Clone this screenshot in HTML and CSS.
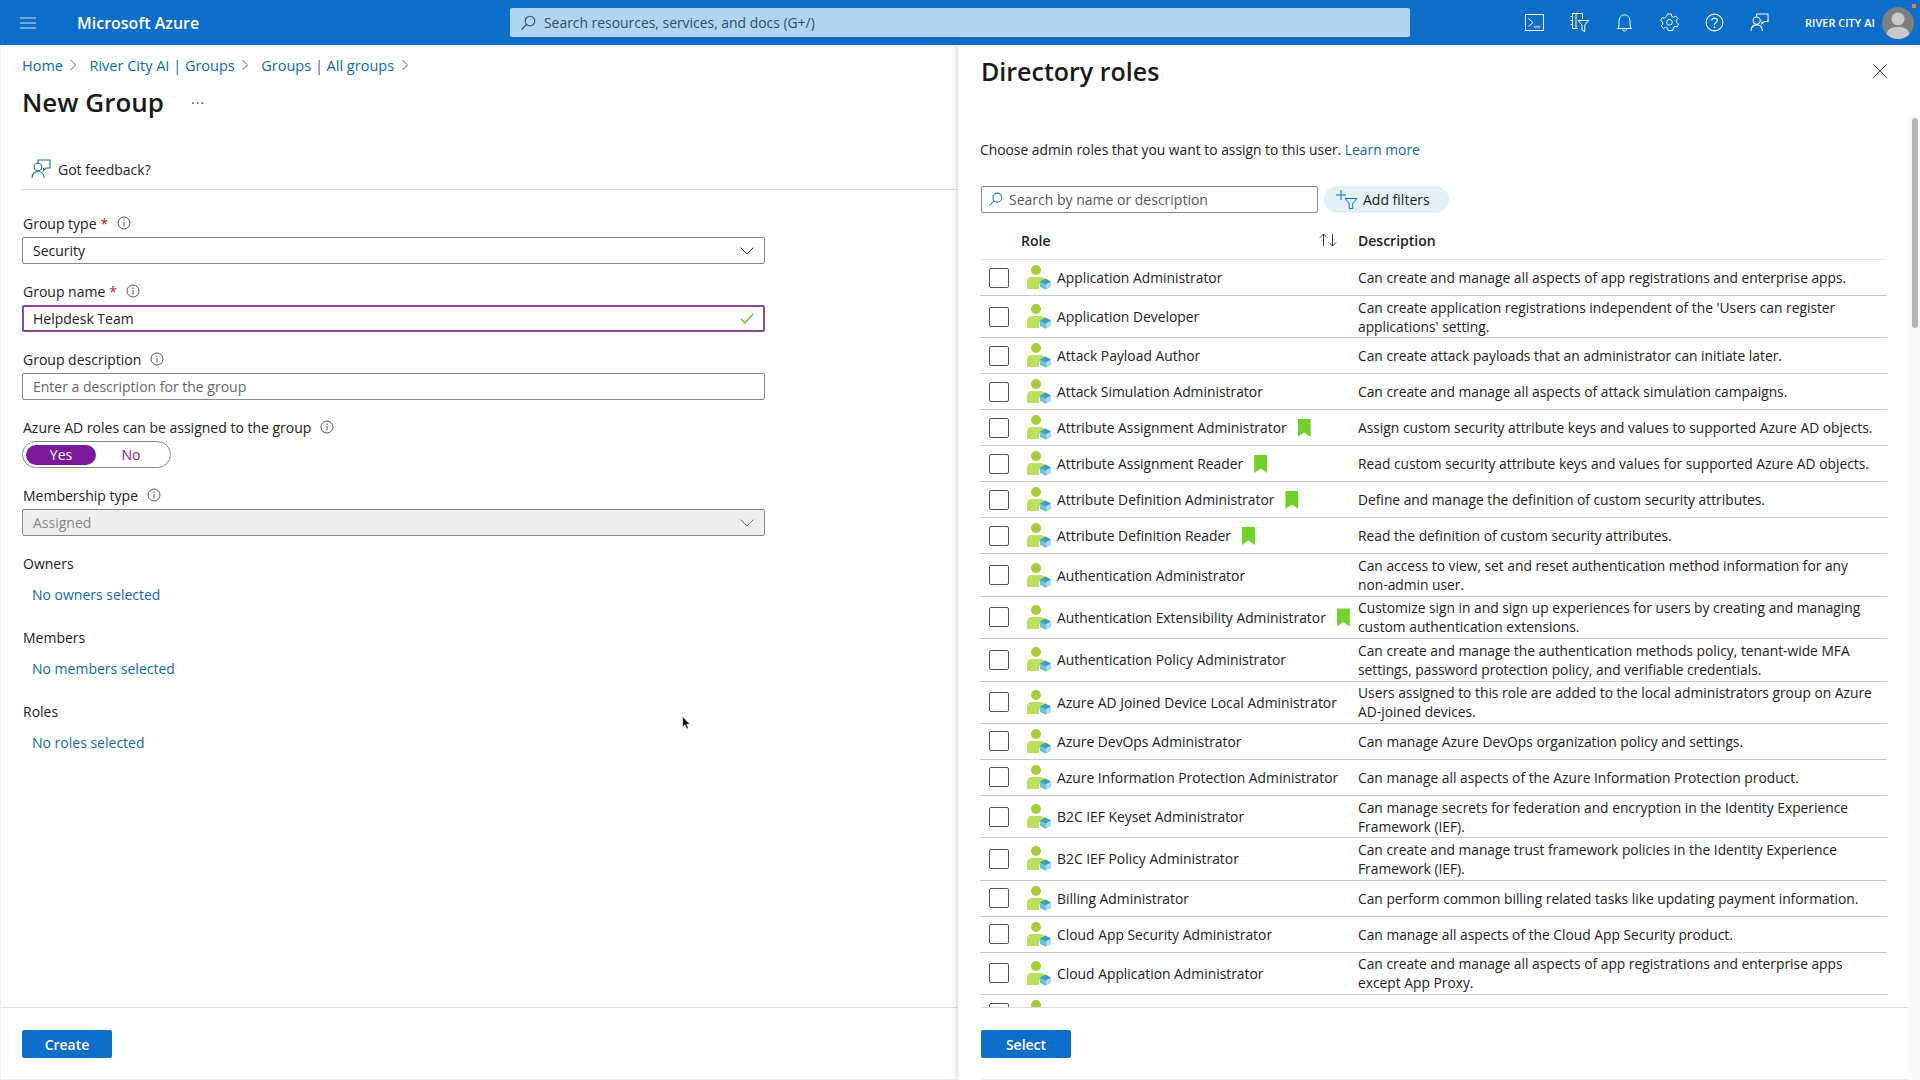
FILE: index.html
```html
<!DOCTYPE html>
<html lang="en">
<head>
    <meta charset="UTF-8">
    <title>New Group - Microsoft Azure</title>
    <link rel="stylesheet" href="styles.css">
</head>
<body>
    <svg class="defs" width="0" height="0">
        <symbol id="role" viewBox="0 0 25 25">
            <circle cx="10" cy="5" r="5" fill="#a6cc38"/>
            <path d="M1 24V17.500C1 14 3 12 6 12H14C17 12 19 13.500 20 15L13 19V24Z" fill="#bbe05c"/>
            <path d="M14 16.500L19.500 13.500L25 16.500V21.500L19.500 24.500L14 21.500Z" fill="#3f9cc0"/>
            <path d="M19.500 19.500L25 16.500V21.500L19.500 24.500Z" fill="#a5e0f2"/>
            <path d="M14 16.500L19.500 19.500V24.500L14 21.500Z" fill="#6fc0dc"/>
        </symbol>
        <symbol id="info" viewBox="0 0 14 14">
            <circle cx="7" cy="7" r="6" fill="none" stroke="#555" stroke-width="1"/>
            <path d="M7 6V10.500" stroke="#555" stroke-width="1"/>
            <circle cx="7" cy="4.200" r=".7" fill="#555"/>
        </symbol>
        <symbol id="chev" viewBox="0 0 10 14">
            <path d="M2.500 2L7.500 7L2.500 12" fill="none" stroke="#666" stroke-width="1"/>
        </symbol>
        <symbol id="lens" viewBox="0 0 16 16">
            <circle cx="10" cy="6" r="4.800" fill="none" stroke="currentColor" stroke-width="1.100"/>
            <path d="M6.500 9.500L1.500 14.500" stroke="currentColor" stroke-width="1.100"/>
        </symbol>
        <symbol id="feedback" viewBox="0 0 20 20">
            <path d="M7 4V1H19V9H15L12.500 11.500V9" fill="none" stroke="currentColor" stroke-width="1.100"/>
            <circle cx="7" cy="8" r="3.800" fill="none" stroke="currentColor" stroke-width="1.100"/>
            <path d="M1 19C1 15 3.500 12.500 7 12.500S13 15 13 19" fill="none" stroke="currentColor" stroke-width="1.100"/>
        </symbol>
    </svg>

    <header class="topbar">
        <svg class="menu-icon" width="16" height="12" viewBox="0 0 16 12"><path d="M0 1H16M0 6H16M0 11H16" stroke="#d5e6f5" stroke-width="1.200"/></svg>
        <span class="brand">Microsoft Azure</span>
        <div class="global-search">
            <svg class="lens" width="16" height="16"><use href="#lens"/></svg>
            <span>Search resources, services, and docs (G+/)</span>
        </div>
        <div class="top-icons">
            <svg width="19" height="18" viewBox="0 0 19 18"><rect x=".5" y=".5" width="18" height="16" fill="none" stroke="#fff" stroke-width="1"/><path d="M3.500 4.500L8 8.500L3.500 12.500M9 13H15" fill="none" stroke="#fff" stroke-width="1"/></svg>
            <svg width="19" height="19" viewBox="0 0 19 19"><path d="M8 15.500H2.500V.5H12.500V6M.5 3.500H2.500M.5 7.500H2.500M.5 11.500H2.500M6 .5V15.500" fill="none" stroke="#fff" stroke-width="1"/><path d="M8 7.500H18.500L14.800 12V18.500L12 17V12Z" fill="none" stroke="#fff" stroke-width="1"/></svg>
            <svg width="15" height="18" viewBox="0 0 15 18"><path d="M.5 14.500C2 13.500 2 11 2 7.500C2 3.500 4.500 .8 7.500 .8S13 3.500 13 7.500C13 11 13 13.500 14.500 14.500ZM5.500 15C5.500 17.800 9.500 17.800 9.500 15" fill="none" stroke="#fff" stroke-width="1"/></svg>
            <svg width="19" height="19" viewBox="0 0 20 20"><path d="M8.200 1H11.800L12.300 3.500L14.500 4.500L16.700 3.200L18.800 5.900L17 7.700L17.500 10L19.500 11.500L18 14.700L15.500 14L13.800 15.800L13.500 18.500H8.500L8 16L5.800 15L3.500 16.200L1.200 13.600L3 11.800L2.700 9.500L.7 8L2.200 4.900L4.700 5.500L6.500 3.700Z" fill="none" stroke="#fff" stroke-width="1"/><circle cx="10" cy="9.800" r="3" fill="none" stroke="#fff" stroke-width="1"/></svg>
            <svg width="19" height="19" viewBox="0 0 20 20"><circle cx="10" cy="10" r="8.800" fill="none" stroke="#fff" stroke-width="1.100"/><path d="M7 8C7 4.500 13 4.500 13 8C13 10 10 10 10 12.500" fill="none" stroke="#fff" stroke-width="1.200"/><circle cx="10" cy="15" r=".9" fill="#fff"/></svg>
            <svg class="feedback-top" width="19" height="19"><use href="#feedback"/></svg>
        </div>
        <span class="tenant">RIVER CITY AI</span>
        <div class="avatar">
            <svg width="32" height="32" viewBox="0 0 32 32"><circle cx="16" cy="16" r="16" fill="#7d7f82"/><circle cx="16" cy="12" r="6.500" fill="#c9c9c9"/><path d="M4.500 27C6 21.500 10 20 16 20S26 21.500 27.500 27C24.500 30.500 20.500 32 16 32S7.500 30.500 4.500 27Z" fill="#c9c9c9"/></svg>
            <span class="status-dot"></span>
        </div>
    </header>

    <main class="workspace">
        <section class="blade">
            <div class="blade-body">
                <nav class="crumbs">
                    <a>Home</a><svg width="10" height="14"><use href="#chev"/></svg>
                    <a>River City AI | Groups</a><svg width="10" height="14"><use href="#chev"/></svg>
                    <a>Groups | All groups</a><svg width="10" height="14"><use href="#chev"/></svg>
                </nav>
                <div class="page-title">
                    <h1>New Group</h1>
                    <span class="dots">···</span>
                </div>
                <div class="feedback-bar">
                    <svg class="feedback-icon" width="20" height="20"><use href="#feedback"/></svg>
                    <span>Got feedback?</span>
                </div>

                <div class="field">
                    <label>Group type <b>*</b><svg class="info" width="14" height="14"><use href="#info"/></svg></label>
                    <div class="control">
                        <span>Security</span>
                        <svg width="14" height="8" viewBox="0 0 14 8"><path d="M.5 .5L7 7L13.500 .5" fill="none" stroke="#333" stroke-width="1"/></svg>
                    </div>
                </div>
                <div class="field">
                    <label>Group name <b>*</b><svg class="info" width="14" height="14"><use href="#info"/></svg></label>
                    <div class="control control-valid">
                        <span>Helpdesk Team</span>
                        <svg width="14" height="11" viewBox="0 0 14 11"><path d="M1 6L5 10L13 1" fill="none" stroke="#5aa63c" stroke-width="1.200"/></svg>
                    </div>
                </div>
                <div class="field">
                    <label>Group description<svg class="info" width="14" height="14"><use href="#info"/></svg></label>
                    <div class="control">
                        <span class="placeholder">Enter a description for the group</span>
                    </div>
                </div>
                <div class="field">
                    <label>Azure AD roles can be assigned to the group<svg class="info" width="14" height="14"><use href="#info"/></svg></label>
                    <div class="toggle">
                        <span class="toggle-on">Yes</span>
                        <span class="toggle-off">No</span>
                    </div>
                </div>
                <div class="field">
                    <label>Membership type<svg class="info" width="14" height="14"><use href="#info"/></svg></label>
                    <div class="control control-disabled">
                        <span>Assigned</span>
                        <svg width="14" height="8" viewBox="0 0 14 8"><path d="M.5 .5L7 7L13.500 .5" fill="none" stroke="#777" stroke-width="1"/></svg>
                    </div>
                </div>
                <div class="pickers">
                    <div class="picker">
                        <div>Owners</div>
                        <a>No owners selected</a>
                    </div>
                    <div class="picker">
                        <div>Members</div>
                        <a>No members selected</a>
                    </div>
                    <div class="picker">
                        <div>Roles</div>
                        <a>No roles selected</a>
                    </div>
                </div>
            </div>
            <footer class="blade-footer">
                <button class="primary">Create</button>
            </footer>
            <svg class="cursor" width="9" height="14" viewBox="0 0 9 14"><path d="M.5 .5V11L3 8.800L4.800 13L6.500 12.300L4.800 8.300H8Z" fill="#111" stroke="#fff" stroke-width=".6"/></svg>
        </section>

        <aside class="panel">
            <div class="panel-head">
                <h2>Directory roles</h2>
                <svg class="close" width="14" height="14" viewBox="0 0 14 14"><path d="M.5 .5L13.500 13.500M13.500 .5L.5 13.500" stroke="#444" stroke-width="1"/></svg>
            </div>
            <p class="intro">Choose admin roles that you want to assign to this user. <a>Learn more</a></p>
            <div class="filter-row">
                <div class="role-search">
                    <svg class="lens-blue" width="15" height="15"><use href="#lens"/></svg>
                    <span>Search by name or description</span>
                </div>
                <div class="add-filters">
                    <svg width="22" height="19" viewBox="0 0 22 19"><path d="M0 5H10M5 0V10" stroke="#0f6cbd" stroke-width="1"/><path d="M9 8.500H21L16.800 13V18.500H13.200V13Z" fill="none" stroke="#0f6cbd" stroke-width="1"/></svg>
                    <span>Add filters</span>
                </div>
            </div>
            <div class="role-head">
                <span class="head-role">Role</span>
                <svg width="18" height="14" viewBox="0 0 18 14"><path d="M4.500 13V1M1 4.500L4.500 1L8 4.500M13.500 1V13M10 9.500L13.500 13L17 9.500" fill="none" stroke="#333" stroke-width="1"/></svg>
                <span class="head-desc">Description</span>
            </div>
            <div class="role-list">
                <div class="role-row"><i class="check"></i><svg class="role-icon"><use href="#role"/></svg><div class="role-name">Application Administrator</div><div class="role-desc">Can create and manage all aspects of app registrations and enterprise apps.</div></div>
                <div class="role-row"><i class="check"></i><svg class="role-icon"><use href="#role"/></svg><div class="role-name">Application Developer</div><div class="role-desc">Can create application registrations independent of the 'Users can register<br>applications' setting.</div></div>
                <div class="role-row"><i class="check"></i><svg class="role-icon"><use href="#role"/></svg><div class="role-name">Attack Payload Author</div><div class="role-desc">Can create attack payloads that an administrator can initiate later.</div></div>
                <div class="role-row"><i class="check"></i><svg class="role-icon"><use href="#role"/></svg><div class="role-name">Attack Simulation Administrator</div><div class="role-desc">Can create and manage all aspects of attack simulation campaigns.</div></div>
                <div class="role-row"><i class="check"></i><svg class="role-icon"><use href="#role"/></svg><div class="role-name">Attribute Assignment Administrator<i class="mark"></i></div><div class="role-desc">Assign custom security attribute keys and values to supported Azure AD objects.</div></div>
                <div class="role-row"><i class="check"></i><svg class="role-icon"><use href="#role"/></svg><div class="role-name">Attribute Assignment Reader<i class="mark"></i></div><div class="role-desc">Read custom security attribute keys and values for supported Azure AD objects.</div></div>
                <div class="role-row"><i class="check"></i><svg class="role-icon"><use href="#role"/></svg><div class="role-name">Attribute Definition Administrator<i class="mark"></i></div><div class="role-desc">Define and manage the definition of custom security attributes.</div></div>
                <div class="role-row"><i class="check"></i><svg class="role-icon"><use href="#role"/></svg><div class="role-name">Attribute Definition Reader<i class="mark"></i></div><div class="role-desc">Read the definition of custom security attributes.</div></div>
                <div class="role-row"><i class="check"></i><svg class="role-icon"><use href="#role"/></svg><div class="role-name">Authentication Administrator</div><div class="role-desc">Can access to view, set and reset authentication method information for any<br>non-admin user.</div></div>
                <div class="role-row"><i class="check"></i><svg class="role-icon"><use href="#role"/></svg><div class="role-name">Authentication Extensibility Administrator<i class="mark"></i></div><div class="role-desc">Customize sign in and sign up experiences for users by creating and managing<br>custom authentication extensions.</div></div>
                <div class="role-row"><i class="check"></i><svg class="role-icon"><use href="#role"/></svg><div class="role-name">Authentication Policy Administrator</div><div class="role-desc">Can create and manage the authentication methods policy, tenant-wide MFA<br>settings, password protection policy, and verifiable credentials.</div></div>
                <div class="role-row"><i class="check"></i><svg class="role-icon"><use href="#role"/></svg><div class="role-name">Azure AD Joined Device Local Administrator</div><div class="role-desc">Users assigned to this role are added to the local administrators group on Azure<br>AD-joined devices.</div></div>
                <div class="role-row"><i class="check"></i><svg class="role-icon"><use href="#role"/></svg><div class="role-name">Azure DevOps Administrator</div><div class="role-desc">Can manage Azure DevOps organization policy and settings.</div></div>
                <div class="role-row"><i class="check"></i><svg class="role-icon"><use href="#role"/></svg><div class="role-name">Azure Information Protection Administrator</div><div class="role-desc">Can manage all aspects of the Azure Information Protection product.</div></div>
                <div class="role-row"><i class="check"></i><svg class="role-icon"><use href="#role"/></svg><div class="role-name">B2C IEF Keyset Administrator</div><div class="role-desc">Can manage secrets for federation and encryption in the Identity Experience<br>Framework (IEF).</div></div>
                <div class="role-row"><i class="check"></i><svg class="role-icon"><use href="#role"/></svg><div class="role-name">B2C IEF Policy Administrator</div><div class="role-desc">Can create and manage trust framework policies in the Identity Experience<br>Framework (IEF).</div></div>
                <div class="role-row"><i class="check"></i><svg class="role-icon"><use href="#role"/></svg><div class="role-name">Billing Administrator</div><div class="role-desc">Can perform common billing related tasks like updating payment information.</div></div>
                <div class="role-row"><i class="check"></i><svg class="role-icon"><use href="#role"/></svg><div class="role-name">Cloud App Security Administrator</div><div class="role-desc">Can manage all aspects of the Cloud App Security product.</div></div>
                <div class="role-row"><i class="check"></i><svg class="role-icon"><use href="#role"/></svg><div class="role-name">Cloud Application Administrator</div><div class="role-desc">Can create and manage all aspects of app registrations and enterprise apps<br>except App Proxy.</div></div>
                <div class="role-row"><i class="check"></i><svg class="role-icon"><use href="#role"/></svg></div>
            </div>
            <footer class="blade-footer">
                <button class="primary">Select</button>
            </footer>
            <div class="scroll-track"><div class="scroll-thumb"></div></div>
        </aside>
    </main>
</body>
</html>
```

FILE: styles.css
```css
* {
    box-sizing: border-box;
}
html, body {
    height: 100%;
}
body {
    margin: 0;
    display: flex;
    flex-direction: column;
    overflow: hidden;
    background-color: #fff;
    color: #222;
    font-family: "Open Sans", "Liberation Sans", Arial, sans-serif;
    font-size: 14px;
}
a {
    color: #0f6aa8;
}
.defs {
    position: absolute;
}

/* top bar */
.topbar {
    display: flex;
    align-items: center;
    flex: 0 0 45px;
    background-color: #0c6ec9;
    color: #fff;
}
.menu-icon {
    margin-left: 20px;
}
.brand {
    width: 433px;
    margin-left: 41px;
    font-size: 16px;
    font-weight: 600;
}
.global-search {
    display: flex;
    align-items: center;
    width: 900px;
    height: 29px;
    padding-left: 10px;
    border-radius: 2px;
    background-color: #b2d4f0;
    color: #2c4f6b;
    font-size: 13.900px;
}
.global-search .lens {
    margin-right: 8px;
}
.top-icons {
    display: grid;
    grid-template-columns: repeat(6, 45px);
    justify-items: center;
    align-items: center;
    margin-left: 102px;
}
.feedback-top {
    color: #fff;
}
.tenant {
    margin-left: 23px;
    font-size: 11px;
    font-weight: 600;
}
.avatar {
    position: relative;
    width: 32px;
    height: 32px;
    margin-left: 7px;
}
.status-dot {
    position: absolute;
    top: -3px;
    right: -2px;
    width: 4px;
    height: 4px;
    background-color: #c98a4a;
}

/* layout */
.workspace {
    display: flex;
    flex: 1;
    min-height: 0;
}
.blade {
    position: relative;
    display: flex;
    flex-direction: column;
    width: 958px;
    border-left: 1px solid #eee;
}
.blade-body {
    flex: 1;
    padding-left: 21px;
}
.blade .blade-footer {
    padding-left: 21px;
}
.blade-footer {
    flex: 0 0 73px;
    padding-top: 22px;
    border-top: 1px solid #ddd;
    border-bottom: 1px solid #eee;
    background-color: #fff;
}
.primary {
    width: 90px;
    height: 28px;
    border: none;
    border-radius: 2px;
    background-color: #0c6ec9;
    color: #fff;
    font-family: inherit;
    font-size: 14px;
    font-weight: 600;
}
.cursor {
    position: absolute;
    left: 681px;
    top: 671px;
}

/* left form */
.crumbs {
    display: flex;
    align-items: center;
    height: 20px;
    margin-top: 10px;
    gap: 5.500px;
    font-size: 14.500px;
}
.crumbs svg {
    margin-right: 5.500px;
}
.page-title {
    display: flex;
    align-items: center;
    margin-top: 9px;
    height: 36px;
}
h1 {
    margin: 0;
    font-size: 26px;
    font-weight: 600;
    color: #1a1a1a;
}
.dots {
    margin-left: 27px;
    font-size: 14px;
    letter-spacing: 1px;
    color: #555;
}
.feedback-bar {
    display: flex;
    align-items: center;
    height: 41px;
    margin-top: 29px;
    padding-left: 9px;
    border-bottom: 1px solid #ddd;
    gap: 7px;
}
.feedback-icon {
    color: #1f6da8;
}
.field {
    width: 743px;
    margin-bottom: 17px;
}
.feedback-bar + .field {
    margin-top: 23px;
}
.field label {
    display: flex;
    align-items: center;
    height: 20px;
    margin-bottom: 4px;
    padding-left: 1px;
}
.field label b {
    margin-left: 4px;
    color: #a4262c;
    font-weight: 400;
}
.info {
    margin-left: 9px;
}
.control {
    display: flex;
    align-items: center;
    justify-content: space-between;
    height: 27px;
    padding: 0 10px 0 10px;
    border: 1px solid #8a8886;
    border-radius: 2px;
}
.control-valid {
    border: 2px solid #8a4a9c;
    padding: 0 9px;
}
.control-disabled {
    background-color: #f1efee;
    color: #888;
}
.placeholder {
    color: #666;
}
.toggle {
    display: flex;
    align-items: center;
    width: 149px;
    height: 27px;
    padding: 3px;
    border: 1px solid #8a8886;
    border-radius: 14px;
}
.toggle span {
    flex: 0 0 70px;
    height: 20px;
    line-height: 20px;
    text-align: center;
    border-radius: 10px;
}
.toggle-on {
    background-color: #7a1a9a;
    color: #fff;
}
.toggle-off {
    color: #7a1a9a;
}
.pickers {
    padding: 1px 0 0 1px;
}
.picker {
    margin-bottom: 23px;
}
.picker div {
    height: 20px;
}
.picker a {
    display: block;
    height: 20px;
    margin-top: 11px;
    padding-left: 9px;
}

/* directory roles panel */
.panel {
    position: relative;
    display: flex;
    flex-direction: column;
    flex: 1;
    padding-left: 23px;
    box-shadow: -2px 0 6px rgba(0, 0, 0, .15);
    background-color: #fff;
}
.panel-head {
    display: flex;
    align-items: center;
    justify-content: space-between;
    height: 28px;
    margin-top: 12px;
    padding-right: 33px;
}
h2 {
    margin: 0;
    font-size: 25px;
    font-weight: 600;
    color: #1a1a1a;
}
.intro {
    height: 20px;
    margin: 55px 0 0 -1px;
    font-size: 13.850px;
}
.filter-row {
    display: flex;
    gap: 6px;
    margin-top: 26px;
}
.role-search {
    display: flex;
    align-items: center;
    width: 337px;
    height: 27px;
    padding-left: 6px;
    border: 1px solid #8a8886;
    border-radius: 2px;
    color: #555;
}
.lens-blue {
    margin-right: 6px;
    color: #1f7ac4;
}
.add-filters {
    display: flex;
    align-items: center;
    width: 125px;
    height: 27px;
    padding-left: 12px;
    border-radius: 14px;
    background-color: #e6f0f9;
    gap: 5px;
}
.role-head {
    display: flex;
    align-items: center;
    width: 907px;
    height: 47px;
    margin-left: -1px;
    padding: 8px 0 0 41px;
    border-bottom: 1px solid #e4e4e4;
    font-weight: 600;
}
.head-role {
    width: 298px;
}
.head-desc {
    margin-left: 21px;
}
.role-list {
    flex: 1;
    min-height: 0;
    overflow: hidden;
    width: 907px;
    margin-left: -1px;
}
.role-row {
    display: grid;
    grid-template-columns: 46px 31px 301px 1fr;
    align-items: center;
    min-height: 36px;
    padding: 1.700px 0;
    border-bottom: 1px solid #c8c8c8;
}
.check {
    display: block;
    width: 20px;
    height: 20px;
    margin-left: 9px;
    border: 1px solid #555;
    border-radius: 2px;
}
.role-icon {
    width: 25px;
    height: 25px;
}
.role-name {
    display: flex;
    align-items: center;
    font-size: 13.860px;
    white-space: nowrap;
}
.role-desc {
    font-size: 13.800px;
    line-height: 19px;
    white-space: nowrap;
}
.mark {
    display: block;
    width: 13px;
    height: 18px;
    margin-left: 11px;
    background-color: #6fd12a;
    clip-path: polygon(0 0, 100% 0, 100% 100%, 50% 75%, 0 100%);
}
.scroll-track {
    position: absolute;
    top: 70px;
    right: 0;
    bottom: 0;
    width: 12px;
    background-color: #fafafa;
}
.scroll-thumb {
    width: 6px;
    height: 210px;
    margin: 3px 0 0 4px;
    border-radius: 3px;
    background-color: #b5b5b5;
}
```
